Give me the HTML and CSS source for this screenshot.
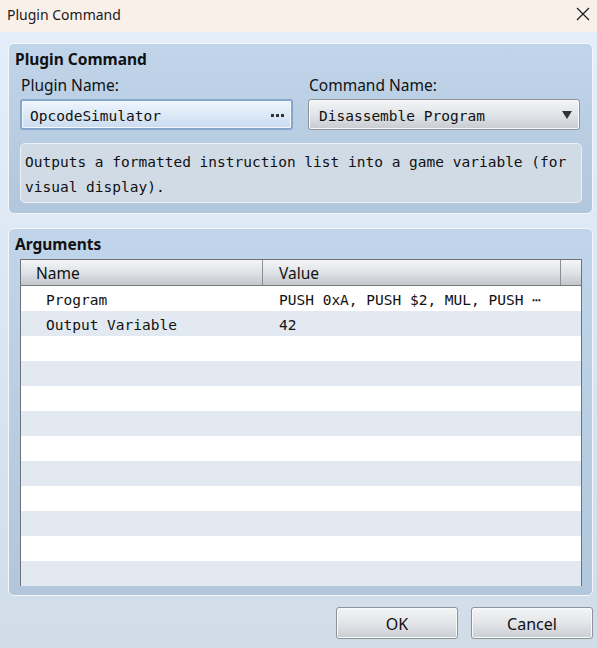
FILE: index.html
```html
<!DOCTYPE html>
<html>
<head>
<meta charset="utf-8">
<link rel="stylesheet" href="styles.css">
</head>
<body>
<div class="window">
  <div class="titlebar">
    <span class="title">Plugin Command</span>
    <svg class="close" width="14" height="14" viewBox="0 0 14 14"><path d="M1 1 L13 13 M13 1 L1 13" stroke="#1a1a1a" stroke-width="1.2" fill="none"/></svg>
  </div>
  <div class="content">
    <section class="panel panel-top">
      <h2 class="heading">Plugin Command</h2>
      <div class="fields">
        <div class="field">
          <div class="label">Plugin Name:</div>
          <div class="input">
            <span class="mono">OpcodeSimulator</span>
            <span class="dots"><i></i><i></i><i></i></span>
          </div>
        </div>
        <div class="field">
          <div class="label">Command Name:</div>
          <div class="select">
            <span class="mono">Disassemble Program</span>
            <span class="arrow"></span>
          </div>
        </div>
      </div>
      <div class="desc mono">Outputs a formatted instruction list into a game variable (for visual display).</div>
    </section>
    <section class="panel panel-args">
      <h2 class="heading">Arguments</h2>
      <div class="table">
        <div class="thead">
          <div class="th th-name">Name</div>
          <div class="th th-value">Value</div>
          <div class="th th-scroll"></div>
        </div>
        <div class="tbody">
          <div class="row"><span class="c-name mono">Program</span><span class="c-value mono">PUSH 0xA, PUSH $2, MUL, PUSH ⋯</span></div>
          <div class="row alt"><span class="c-name mono">Output Variable</span><span class="c-value mono">42</span></div>
          <div class="row"></div>
          <div class="row alt"></div>
          <div class="row"></div>
          <div class="row alt"></div>
          <div class="row"></div>
          <div class="row alt"></div>
          <div class="row"></div>
          <div class="row alt"></div>
          <div class="row"></div>
          <div class="row alt"></div>
        </div>
      </div>
    </section>
    <div class="footer">
      <button class="btn">OK</button>
      <button class="btn">Cancel</button>
    </div>
  </div>
</div>
</body>
</html>
```
FILE: styles.css
```css
* { box-sizing: border-box; }
html, body { margin: 0; padding: 0; }
body {
  width: 597px;
  height: 648px;
  overflow: hidden;
  font-family: "Noto Sans", "Open Sans", sans-serif;
  color: #000;
}
.window {
  width: 597px;
  height: 648px;
  display: flex;
  flex-direction: column;
  background: linear-gradient(to bottom, #e4effb 0%, #dbe6f2 50%, #d0dce8 100%);
}
.titlebar {
  height: 32px;
  flex: none;
  background: #f9f1e9;
  display: flex;
  align-items: center;
  justify-content: space-between;
  padding: 0 7px 4px 7px;
}
.title {
  font-family: "Noto Sans", sans-serif;
  font-size: 14px;
  color: #1a1a1a;
}
.mono {
  font-family: "DejaVu Sans Mono", monospace;
  font-size: 14.5px;
}
.content {
  flex: 1;
  display: flex;
  flex-direction: column;
  padding: 11px 4px 0 8px;
}
.panel {
  border: 1px solid #f2f7fc;
  border-radius: 6px;
  background: linear-gradient(to bottom, #c1d5ea 0%, #b3c7dc 100%);
  padding: 0 10px 9px 11px;
}
.panel-top { height: 171px; }
.panel-args { margin-top: 14px; height: 368px; }
.heading {
  margin: 0 0 0 -5px;
  font-size: 15.5px;
  font-weight: bold;
  height: 30px;
  line-height: 31px;
  color: #111;
}
.panel-top .heading { margin-top: 1px; height: 29px; line-height: 29px; }
.fields {
  display: flex;
  gap: 15px;
}
.field { display: flex; flex-direction: column; }
.field:first-child { width: 273px; }
.field:last-child { width: 272px; }
.label {
  height: 25px;
  line-height: 23px;
  font-size: 15.5px;
  padding-left: 1px;
  color: #111;
}
.input {
  height: 31px;
  border: 2px solid #86a7cc;
  border-radius: 3px;
  background: linear-gradient(to bottom, #eef5fd 0%, #dce9f7 50%, #cbdcf0 100%);
  box-shadow: inset 0 0 0 1px #f4f8fd;
  display: flex;
  align-items: center;
  justify-content: space-between;
  padding: 2px 7px 0 8px;
  color: #111;
}
.dots { display: flex; gap: 2px; padding-top: 0; }
.dots i { display: block; width: 3px; height: 3px; background: #333; }
.select {
  height: 31px;
  border: 1px solid #8e9399;
  border-radius: 3px;
  background: linear-gradient(to bottom, #f3f4f6 0%, #e1e4e8 50%, #c8ccd1 100%);
  box-shadow: inset 0 0 0 1px #f8f9fa;
  display: flex;
  align-items: center;
  justify-content: space-between;
  padding: 2px 7px 0 10px;
  color: #111;
}
.arrow {
  width: 0; height: 0;
  border-left: 5px solid transparent;
  border-right: 5px solid transparent;
  border-top: 8px solid #333;
  margin-top: -2px;
}
.desc {
  margin-top: 13px;
  height: 60px;
  border: 1px solid #eaf0f6;
  border-radius: 5px;
  background: #d0dbe6;
  padding: 6px 4px 0 4px;
  line-height: 25px;
  color: #111;
}
.table {
  height: 327px;
  border: 1px solid #6f7378;
  background: #fff;
  display: flex;
  flex-direction: column;
}
.thead {
  height: 26px;
  flex: none;
  display: flex;
  background: linear-gradient(to bottom, #f4f5f7 0%, #dfe2e6 50%, #c3c7cc 100%);
  border-bottom: 1px solid #75797e;
}
.th {
  font-size: 15.5px;
  line-height: 27px;
  color: #111;
  border-right: 1px solid #8a8e93;
}
.th-name { width: 242px; padding-left: 15px; }
.th-value { width: 298px; padding-left: 16px; }
.th-scroll { flex: 1; border-right: none; }
.tbody { flex: 1; display: flex; flex-direction: column; }
.row {
  height: 25px;
  flex: none;
  display: flex;
  align-items: center;
  padding-top: 2px;
  background: #fff;
  color: #111;
}
.row.alt { background: #e2e9f1; }
.c-name { width: 258px; padding-left: 25px; }
.c-value { padding-left: 0; }
.footer {
  display: flex;
  justify-content: flex-end;
  gap: 13px;
  padding-top: 11px;
}
.btn {
  width: 122px;
  height: 32px;
  border: 1px solid #8e9399;
  border-radius: 3px;
  background: linear-gradient(to bottom, #f3f4f6 0%, #e3e5e8 50%, #c9cdd2 100%);
  box-shadow: inset 0 0 0 1px #f8f9fa;
  font-family: "Noto Sans", sans-serif;
  font-size: 16px;
  color: #111;
  padding: 2px 0 0 0;
}
```
